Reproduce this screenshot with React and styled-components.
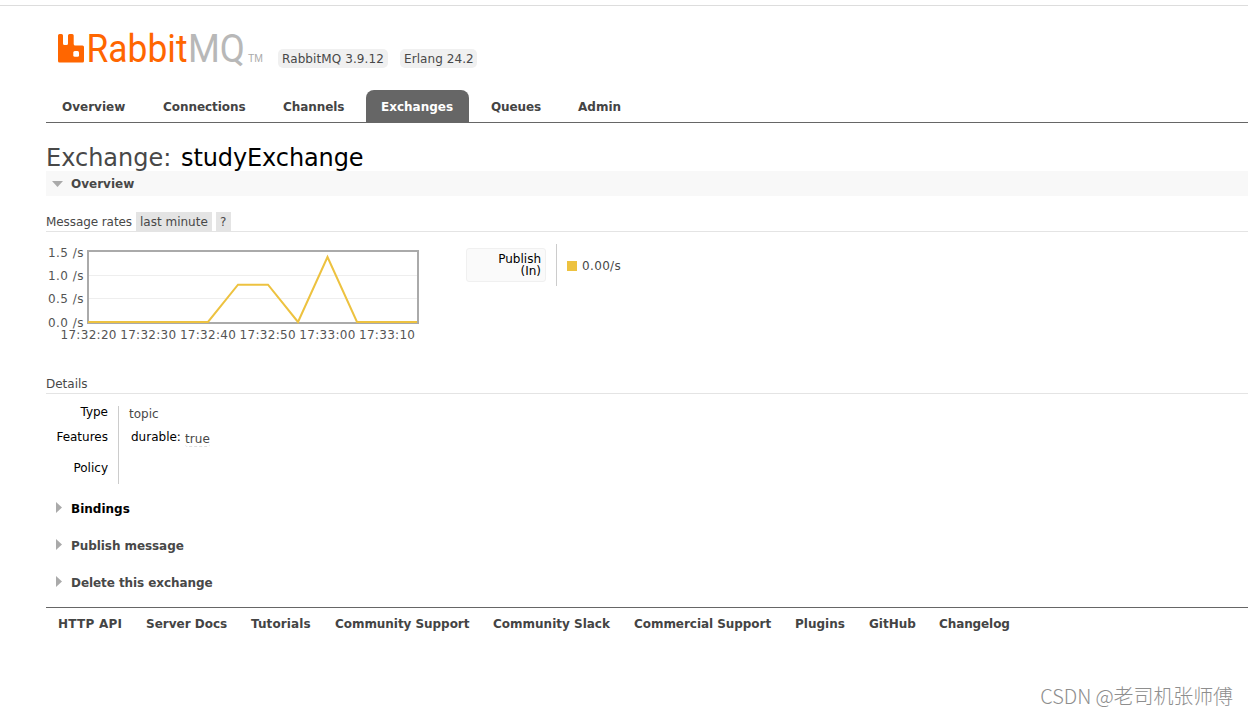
import React from 'react';
import styled, { createGlobalStyle } from 'styled-components';

const GlobalStyle = createGlobalStyle`
    * {
        box-sizing: border-box;
    }

    body {
        margin: 0;
        background: #fff;
        color: #484848;
        font: 12px/16px "DejaVu Sans", Verdana, sans-serif;
        overflow: hidden;
    }
`;

const Page = styled.div`
    position: relative;
    height: 715px;
    padding-top: 5px;
`;

const TopLine = styled.div`
    height: 1px;
    background: #ddd;
`;

const Main = styled.div`
    padding-left: 46px;
`;

const Text = styled.span`
    white-space: nowrap;
    letter-spacing: ${props => props.$spacing || 0}px;
`;

const Header = styled.header`
    display: flex;
    height: 84px;
    padding-top: 14px;
`;

const Logo = styled.svg`
    display: block;
    width: 232px;
    height: 60px;
    flex: none;
`;

const Versions = styled.div`
    display: flex;
    gap: 12px;
    padding-top: 29px;
`;

const Version = styled.div`
    width: ${props => props.$width}px;
    height: 19px;
    padding: 2px 0 0 4px;
    border-radius: 5px;
    background: #f0f0f0;
`;

const Tabs = styled.nav`
    display: flex;
    height: 33px;
    padding-left: 1px;
    border-bottom: 1px solid #666;
`;

const Tab = styled.a`
    width: ${props => props.$width}px;
    margin-right: 7px;
    height: 32px;
    padding: 9px 0 0 15px;
    font-weight: bold;
    border-radius: 8px 8px 0 0;
    color: ${props => (props.$selected ? '#fff' : '#444')};
    background: ${props => (props.$selected ? '#666' : 'transparent')};
`;

const Title = styled.h1`
    height: 48px;
    margin: 0;
    padding-top: 20px;
    font-size: 24px;
    line-height: 30px;
    font-weight: normal;

    b {
        margin-left: 2px;
        color: #000;
        font-weight: normal;
        letter-spacing: -0.1px;
    }
`;

const SectionTitle = styled.h2`
    display: flex;
    align-items: center;
    height: 25px;
    margin: 0 0 ${props => props.$gap || 0}px;
    font-size: 12px;
    color: ${props => (props.$active ? '#000' : '#484848')};
    background: ${props => (props.$open ? '#f8f8f8' : 'transparent')};
`;

const Arrow = styled.svg`
    width: 25px;
    height: 14px;
    flex: none;
`;

const SubTitle = styled.h3`
    display: flex;
    gap: 4px;
    height: 20px;
    margin: 0;
    font-size: 12px;
    line-height: 20px;
    font-weight: normal;
    border-bottom: 1px solid #e4e4e4;
`;

const Option = styled.span`
    width: ${props => props.$width}px;
    height: 19px;
    padding-left: 4px;
    background: #e4e4e4;
`;

const Rates = styled.div`
    display: flex;
    height: 142px;
    padding-top: 12px;
`;

const Chart = styled.svg`
    width: 400px;
    height: 110px;
    margin-right: 20px;
    flex: none;

    text {
        fill: #545454;
        font-size: 12px;
    }
`;

const Legend = styled.div`
    display: flex;
    align-items: center;
    height: 42px;
`;

const LegendLabel = styled.div`
    width: 80px;
    height: 34px;
    padding: 4px 4px 0 0;
    border: 1px solid #f0f0f0;
    border-radius: 3px;
    background: #fafafa;
    color: #000;
    line-height: 12px;
    text-align: right;
`;

const LegendValue = styled.div`
    display: flex;
    align-items: center;
    gap: 5px;
    height: 42px;
    margin-left: 10px;
    padding: 2px 0 0 10px;
    border-left: 1px solid #ccc;
`;

const Swatch = styled.span`
    width: 10px;
    height: 10px;
    background: #edc240;
`;

const Facts = styled.div`
    display: flex;
    height: 102px;
    padding-top: 12px;
`;

const FactNames = styled.div`
    width: 73px;
    height: 78px;
    padding-right: 10px;
    border-right: 1px solid #ccc;
    color: #000;
    line-height: 12px;
    text-align: right;
`;

const FactName = styled.div`
    height: ${props => props.$height}px;
`;

const FactValues = styled.div`
    padding-left: 10px;
`;

const Feature = styled.div`
    display: flex;
    gap: 4px;
    padding: 6px 0 0 2px;
    color: #000;
`;

const Value = styled.span`
    height: 18px;
    padding-top: 2px;
    border-bottom: 1px dashed #ddd;
    border-radius: 3px;
    color: #484848;
`;

const Topic = styled.div`
    height: 17px;
`;

const Footer = styled.footer`
    display: flex;
    padding: 8px 0 0 12px;
    border-top: 1px solid #666;
    font-weight: bold;
    color: #444;
`;

const FooterLink = styled.a`
    width: ${props => props.$width}px;
    white-space: nowrap;
    letter-spacing: ${props => props.$spacing || 0}px;
`;

const Watermark = styled.div`
    position: absolute;
    right: 15px;
    bottom: 6px;
    color: #8e8e8e;
    font: 300 20px/26px "Noto Sans CJK SC", sans-serif;
    letter-spacing: -0.1px;
    white-space: nowrap;
`;

const tabs = [
    { name: 'Overview', width: 94 },
    { name: 'Connections', width: 113, spacing: -0.05 },
    { name: 'Channels', width: 91, spacing: -0.08 },
    { name: 'Exchanges', width: 103, selected: true },
    { name: 'Queues', width: 80, spacing: -0.1 },
    { name: 'Admin', width: 73 }
];

const links = [
    { name: 'HTTP API', width: 88, spacing: 0.25 },
    { name: 'Server Docs', width: 105 },
    { name: 'Tutorials', width: 84, spacing: 0.1 },
    { name: 'Community Support', width: 158, spacing: -0.05 },
    { name: 'Community Slack', width: 141 },
    { name: 'Commercial Support', width: 161, spacing: -0.05 },
    { name: 'Plugins', width: 74 },
    { name: 'GitHub', width: 70 },
    { name: 'Changelog', width: 80, spacing: -0.1 }
];

const rates = ['1.5 /s', '1.0 /s', '0.5 /s', '0.0 /s'];
const times = ['17:32:20', '17:32:30', '17:32:40', '17:32:50', '17:33:00', '17:33:10'];

const RabbitLogo = () => (
    <Logo viewBox="0 -10 232 60">
        <path
            fill="#f60"
            d="M13.500 4h2q1.500 0 1.500 1.500v8q0 1.500 1.500 1.500h2q1.500 0 1.500-1.500v-8q0-1.500 1.500-1.500h2.700q1.500 0 1.500 1.500v8.500q0 1.500 1.500 1.500h7.300q1.500 0 1.500 1.500v14q0 1.500-1.500 1.500h-23q-1.500 0-1.500-1.500v-25.500q0-1.500 1.500-1.500z"
        />
        <rect x="27.300" y="21" width="5.700" height="5.700" rx="1.500" fill="#fff" />
        <text x="40.500" y="32.300" textLength="101" lengthAdjust="spacingAndGlyphs" fill="#f60" fontFamily="Roboto" fontSize="38.500">Rabbit</text>
        <text x="142" y="32.300" textLength="57" lengthAdjust="spacingAndGlyphs" fill="#b8b8b8" fontFamily="Roboto" fontSize="38.500">MQ</text>
        <text x="202" y="32" textLength="15" lengthAdjust="spacingAndGlyphs" fill="#aaa" fontFamily="Liberation Sans" fontSize="10">TM</text>
    </Logo>
);

const Triangle = ({ open }) => (
    <Arrow viewBox="0 0 25 14">
        <path fill="#aaa" d={open ? 'M6 4h11l-5.500 6z' : 'M10 0v11l6-5.500z'} />
    </Arrow>
);

const RateChart = () => (
    <Chart viewBox="0 0 400 110">
        <path d="M43 31.500h328M43 54.500h328" stroke="#eee" />
        <rect x="42" y="7" width="330" height="72" fill="none" stroke="#aaa" strokeWidth="2" />
        <polyline
            points="42,78 162,78 192,40.700 222,40.700 252,78 281.500,13 311,78 371,78"
            fill="none"
            stroke="#edc240"
            strokeWidth="2"
        />
        {rates.map((rate, i) => (
            <text key={rate} x="2" y={[13, 36, 59, 83][i]} textLength="35.500">{rate}</text>
        ))}
        {times.map((time, i) => (
            <text key={time} x={14.500 + i * 59.700} y="95" textLength="56">{time}</text>
        ))}
    </Chart>
);

const App = () => (
    <Page>
        <GlobalStyle />
        <TopLine />
        <Main>
            <Header>
                <RabbitLogo />
                <Versions>
                    <Version $width={110}><Text $spacing={0.1}>RabbitMQ 3.9.12</Text></Version>
                    <Version $width={77}><Text $spacing={0.08}>Erlang 24.2</Text></Version>
                </Versions>
            </Header>
            <Tabs>
                {tabs.map(tab => (
                    <Tab key={tab.name} $width={tab.width} $selected={tab.selected}>
                        <Text $spacing={tab.spacing}>{tab.name}</Text>
                    </Tab>
                ))}
            </Tabs>
            <Title>
                <Text>Exchange: <b>studyExchange</b></Text>
            </Title>
            <SectionTitle $open $gap={16}>
                <Triangle open />
                <Text>Overview</Text>
            </SectionTitle>
            <SubTitle>
                <Text $spacing={-0.08}>Message rates</Text>
                <Option $width={76}><Text>last minute</Text></Option>
                <Option $width={15}>?</Option>
            </SubTitle>
            <Rates>
                <RateChart />
                <Legend>
                    <LegendLabel>Publish<br />(In)</LegendLabel>
                    <LegendValue>
                        <Swatch />
                        <Text $spacing={0.35}>0.00/s</Text>
                    </LegendValue>
                </Legend>
            </Rates>
            <SubTitle>
                <Text>Details</Text>
            </SubTitle>
            <Facts>
                <FactNames>
                    <FactName $height={25}><Text>Type</Text></FactName>
                    <FactName $height={31}><Text>Features</Text></FactName>
                    <FactName $height={12}><Text>Policy</Text></FactName>
                </FactNames>
                <FactValues>
                    <Topic><Text>topic</Text></Topic>
                    <Feature>
                        <Text>durable:</Text>
                        <Value><Text $spacing={0.1}>true</Text></Value>
                    </Feature>
                </FactValues>
            </Facts>
            <SectionTitle $active $gap={12}>
                <Triangle />
                <Text>Bindings</Text>
            </SectionTitle>
            <SectionTitle $gap={12}>
                <Triangle />
                <Text $spacing={-0.07}>Publish message</Text>
            </SectionTitle>
            <SectionTitle $gap={12}>
                <Triangle />
                <Text $spacing={-0.07}>Delete this exchange</Text>
            </SectionTitle>
            <Footer>
                {links.map(link => (
                    <FooterLink key={link.name} $width={link.width} $spacing={link.spacing}>{link.name}</FooterLink>
                ))}
            </Footer>
        </Main>
        <Watermark>CSDN @老司机张师傅</Watermark>
    </Page>
);

export default App;
